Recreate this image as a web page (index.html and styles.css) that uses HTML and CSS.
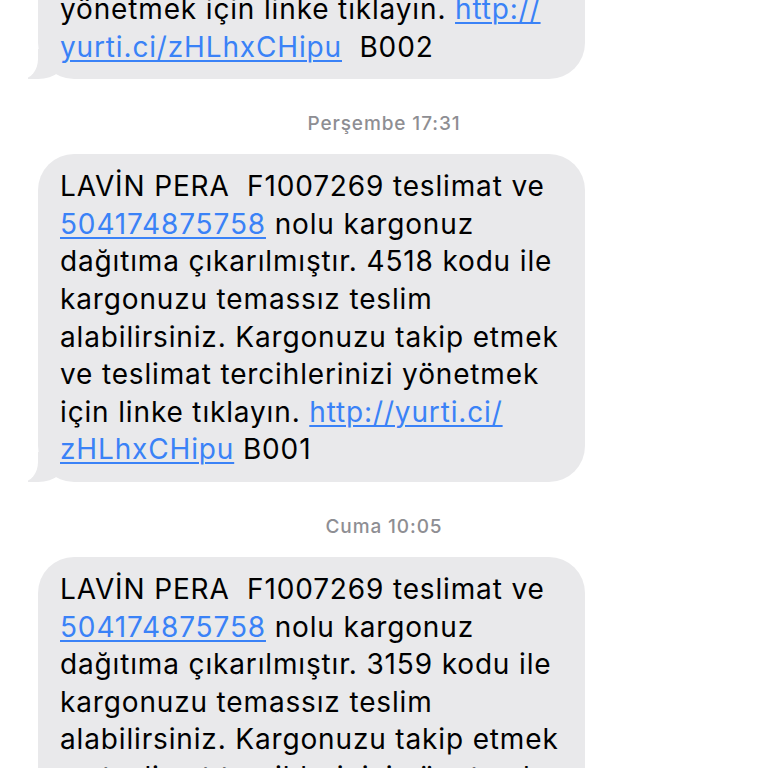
FILE: index.html
```html
<!DOCTYPE html>
<html lang="tr">
<head>
<meta charset="utf-8">
<link rel="stylesheet" href="styles.css">
</head>
<body>
<div class="thread">
  <div class="bubble bubble-top">
    yönetmek için linke tıklayın. <a class="link" href="#">http://</a><br><a class="link" href="#">yurti.ci/zHLhxCHipu</a>&nbsp; B002
  </div>

  <div class="stamp">Perşembe 17:31</div>

  <div class="bubble">
    LAVİN PERA&nbsp; F1007269 teslimat ve<br>
    <a class="link" href="#">504174875758</a> nolu kargonuz<br>
    dağıtıma çıkarılmıştır. 4518 kodu ile<br>
    kargonuzu temassız teslim<br>
    alabilirsiniz. Kargonuzu takip etmek<br>
    ve teslimat tercihlerinizi yönetmek<br>
    için linke tıklayın. <a class="link" href="#">http://yurti.ci/</a><br>
    <a class="link" href="#">zHLhxCHipu</a> B001
  </div>

  <div class="stamp">Cuma 10:05</div>

  <div class="bubble bubble-cut">
    LAVİN PERA&nbsp; F1007269 teslimat ve<br>
    <a class="link" href="#">504174875758</a> nolu kargonuz<br>
    dağıtıma çıkarılmıştır. 3159 kodu ile<br>
    kargonuzu temassız teslim<br>
    alabilirsiniz. Kargonuzu takip etmek<br>
    ve teslimat tercihlerinizi yönetmek
  </div>
</div>
</body>
</html>
```
FILE: styles.css
```css
html, body {
  margin: 0;
  padding: 0;
  background: #ffffff;
}
body {
  width: 768px;
  height: 768px;
  overflow: hidden;
  font-family: Inter, "Noto Sans", "Liberation Sans", sans-serif;
  -webkit-font-smoothing: antialiased;
}
.thread {
  display: flex;
  flex-direction: column;
  align-items: flex-start;
  margin-top: -60px;
}
.bubble {
  position: relative;
  z-index: 0;
  box-sizing: border-box;
  width: 547px;
  margin-left: 38px;
  background: #e9e9eb;
  color: #000;
  border-radius: 36px;
  padding: 14px 20px 13px 22px;
  font-size: 28px;
  line-height: 37.6px;
  letter-spacing: 0.85px;
  white-space: nowrap;
}
.bubble-top {
  padding-top: 51px;
}
.bubble-cut {
  padding-bottom: 60px;
}
.bubble::before {
  content: "";
  position: absolute;
  z-index: -1;
  left: -10px;
  bottom: 0;
  width: 40px;
  height: 30px;
  background: #e9e9eb;
  border-bottom-right-radius: 30px 24px;
}
.bubble::after {
  content: "";
  position: absolute;
  z-index: -1;
  left: -40px;
  bottom: 0;
  width: 40px;
  height: 30px;
  background: #ffffff;
  border-bottom-right-radius: 16px 20px;
}
.link {
  color: #3a82f7;
  text-decoration: underline;
  text-decoration-thickness: 1.5px;
  text-underline-offset: 3px;
}
.stamp {
  align-self: stretch;
  text-align: center;
  margin: 34px 0 19px;
  font-size: 19px;
  line-height: 22px;
  letter-spacing: 0.9px;
  color: #8e8e93;
  font-weight: 500;
}
```
